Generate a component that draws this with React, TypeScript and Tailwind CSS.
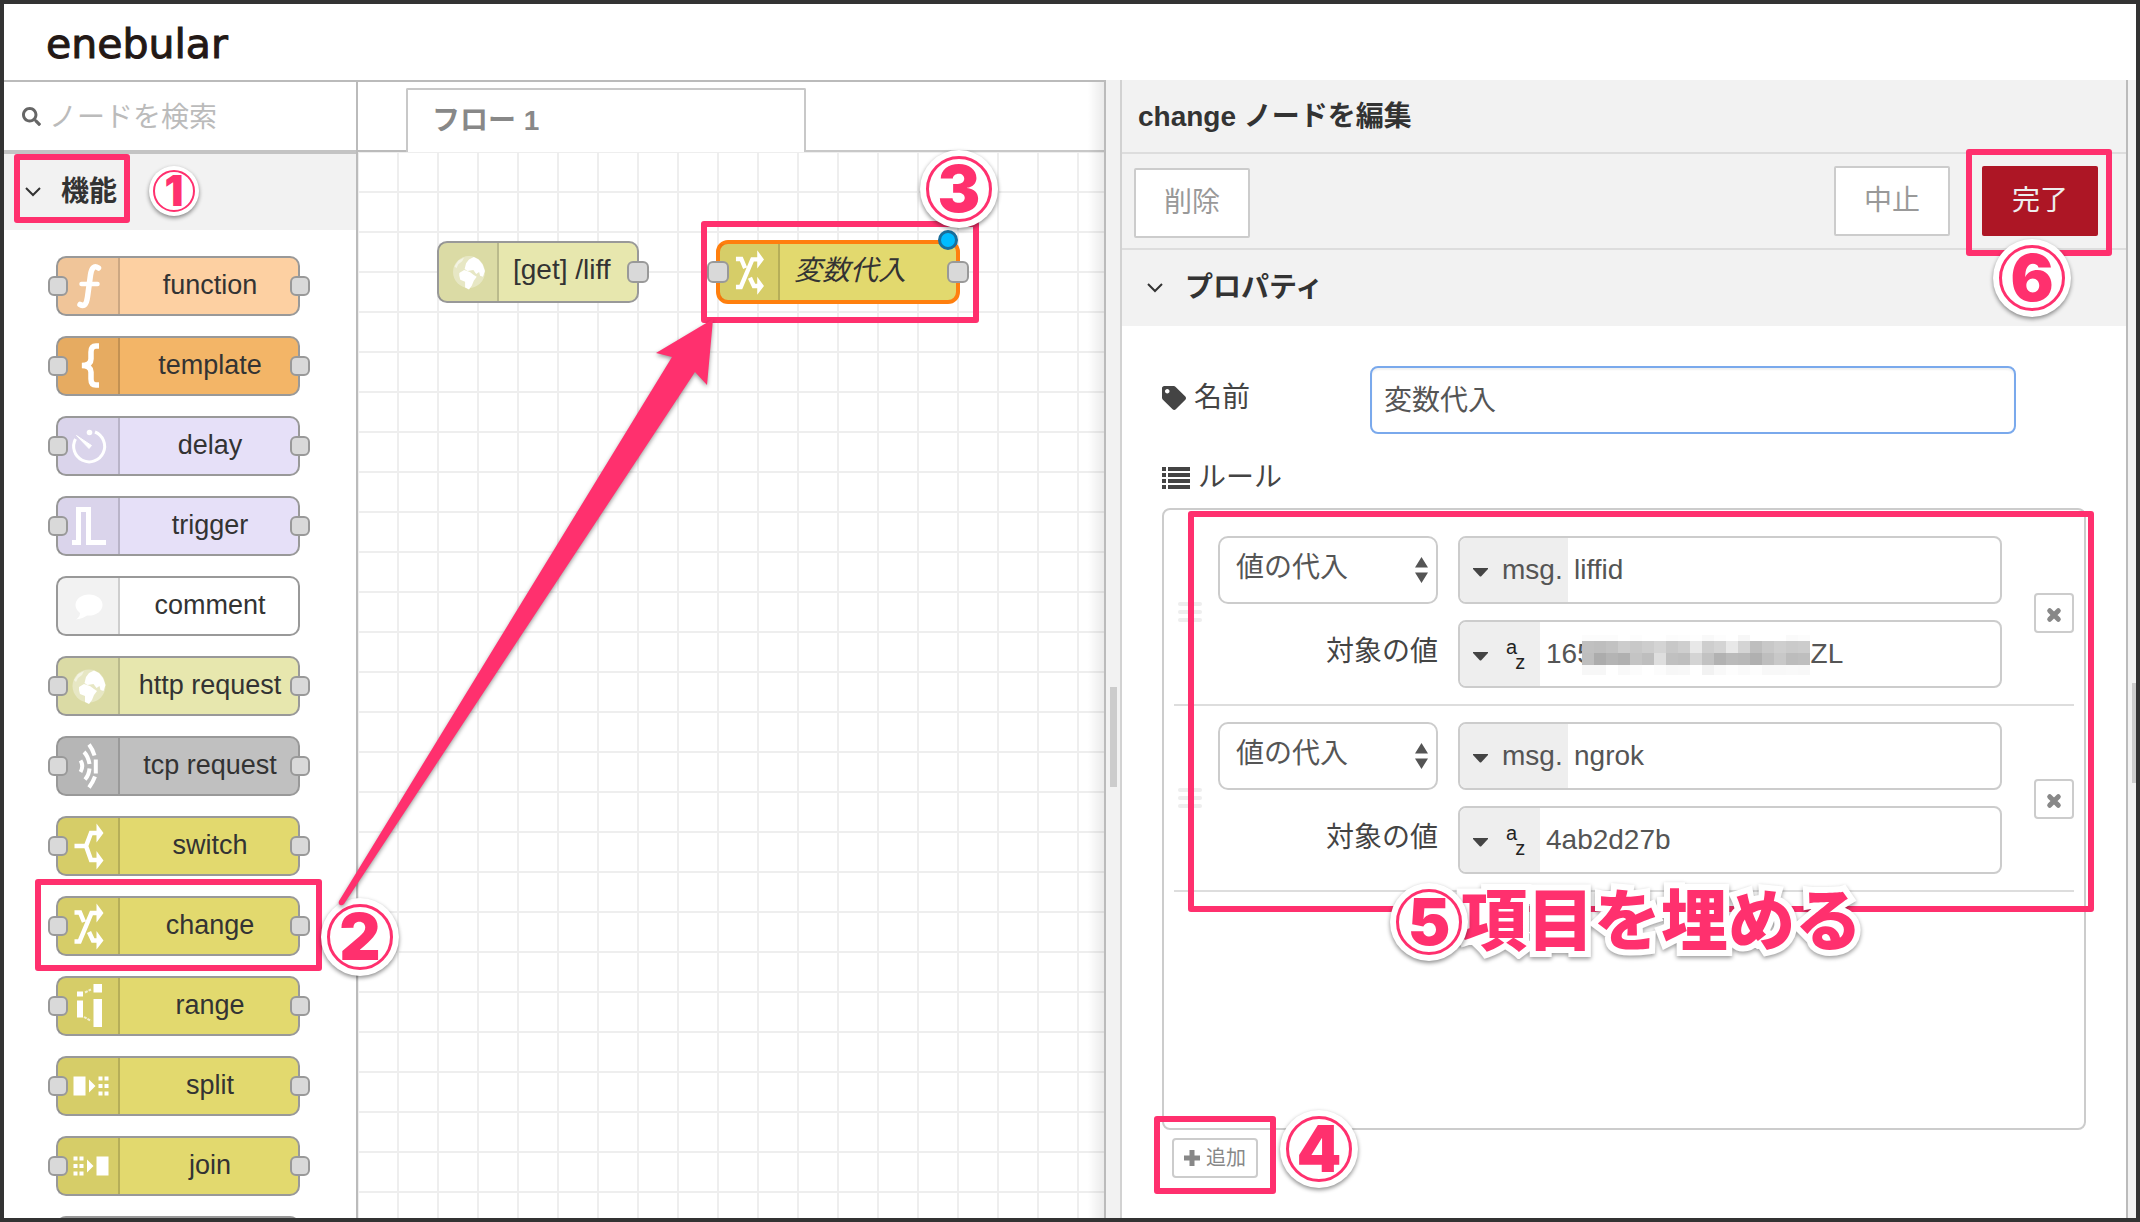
import { useState } from "react";
import type { ReactNode } from "react";
import clsx from "clsx";
import { FaSearch, FaTag } from "react-icons/fa";

type IconName =
  | "function"
  | "template"
  | "delay"
  | "trigger"
  | "comment"
  | "globe"
  | "bridge"
  | "switch"
  | "change"
  | "range"
  | "split"
  | "join";

const arrowHeads = (
  <path
    d="M38.500 7.500l7 9.500-7 9.500zM38.500 35l7 9.500-7 9z"
    fill="#fff"
    stroke="none"
  />
);

const icons: Record<IconName, ReactNode> = {
  function: (
    <g fill="none" stroke="#fff" strokeLinecap="round">
      <path d="M40.500 12C36 9 33.500 12 32.500 19L29.500 41C28.500 48 26.500 51 22 48.500" strokeWidth="5.500" />
      <path d="M23.500 28H39.500" strokeWidth="4.500" />
    </g>
  ),
  template: (
    <path
      d="M41 10h-3q-5 0-5 6v7q0 6-9 6.500 9 .5 9 6.500v7q0 6 5 6h3"
      fill="none"
      stroke="#fff"
      strokeWidth="5.500"
    />
  ),
  delay: (
    <g stroke="#fff" fill="none">
      <path d="M37 16A15.500 15.500 0 1 1 17.500 23" strokeWidth="3" />
      <circle cx="31.500" cy="16.500" r="2.800" fill="#fff" stroke="none" />
      <path d="M18.500 19.500L33.500 29.500 31 32.500z" fill="#fff" strokeWidth="1" />
    </g>
  ),
  trigger: (
    <path d="M14 46.500H20.500V13.500H30.500V46.500H48" fill="none" stroke="#fff" strokeWidth="5" />
  ),
  comment: (
    <g fill="#fff">
      <ellipse cx="31" cy="29" rx="13.500" ry="10.500" />
      <path d="M22 35q1 5-4 8.500 8-1 12-5z" />
    </g>
  ),
  globe: (
    <g fill="#fff">
      <circle cx="31" cy="30" r="16.500" opacity="0.35" />
      <path d="M28 21l3-4 5-2.500 5 2.500 4 5 2.500 7-2 6-3-1-1-4-3 2-3-4-6 1-3-2zM21 31l5-3 6 2 4 3 3 2-3 4-2 5-3 4-4-2v-6l-5-2-1-4z" />
      <path d="M16 24l4-6 6-3-2 4-4 3-2 4z" opacity="0.5" />
    </g>
  ),
  bridge: (
    <g fill="none" stroke="#fff" strokeWidth="4">
      <path d="M31 8.500Q34.500 13 36.500 19.500M37.800 23.500V37.500M37 40.500Q35 46 31 51.500" />
      <path d="M26 16Q30 20 31.500 28M31.500 32.500Q31 39 27 43.500" />
      <path d="M22.500 24.500Q26 30 22.500 36" />
    </g>
  ),
  switch: (
    <g fill="none" stroke="#fff" strokeWidth="4.500">
      <path d="M16.500 30H28M27.500 31.500L33 17H40M27.500 28.500L33 44H40" />
      {arrowHeads}
    </g>
  ),
  change: (
    <g fill="none" stroke="#fff" strokeWidth="4.500">
      <path d="M16.500 45.500H21.500L33.500 17H40M16.500 16.500H22L26 26M31 36L35 44.500H40" />
      {arrowHeads}
    </g>
  ),
  range: (
    <g fill="#fff">
      <path d="M19 15.500h6v5h-6zM19 24.500h6v17h-6zM35.500 8h8.500v8.500h-8.500zM35.500 23h8.500v28h-8.500z" />
      <path d="M27 16.500l6-3M26 41l7 4" stroke="#fff" strokeWidth="2" strokeDasharray="3 1" opacity="0.7" />
    </g>
  ),
  split: (
    <path
      d="M15.500 20.500h12v19h-12zM31 23.500l6.500 6.500-6.500 6.500zM40.500 20.500h4v4h-4zM46.500 20.500h4v4h-4zM40.500 28h4v4h-4zM46.500 28h4v4h-4zM40.500 35.500h4v4h-4zM46.500 35.500h4v4h-4z"
      fill="#fff"
    />
  ),
  join: (
    <path
      d="M38.500 20.500h12v19h-12zM29 23.500l6.500 6.500-6.500 6.500zM15.500 20.500h4v4h-4zM21.500 20.500h4v4h-4zM15.500 28h4v4h-4zM21.500 28h4v4h-4zM15.500 35.500h4v4h-4zM21.500 35.500h4v4h-4z"
      fill="#fff"
    />
  ),
};

const paletteNodes: { name: string; icon: IconName; color: string }[] = [
  { name: "function", icon: "function", color: "bg-[#fdd0a2]" },
  { name: "template", icon: "template", color: "bg-[#f3b567]" },
  { name: "delay", icon: "delay", color: "bg-[#e6e0f8]" },
  { name: "trigger", icon: "trigger", color: "bg-[#e6e0f8]" },
  { name: "comment", icon: "comment", color: "bg-white" },
  { name: "http request", icon: "globe", color: "bg-[#e7e7ae]" },
  { name: "tcp request", icon: "bridge", color: "bg-[#c0c0c0]" },
  { name: "switch", icon: "switch", color: "bg-[#e2d96e]" },
  { name: "change", icon: "change", color: "bg-[#e2d96e]" },
  { name: "range", icon: "range", color: "bg-[#e2d96e]" },
  { name: "split", icon: "split", color: "bg-[#e2d96e]" },
  { name: "join", icon: "join", color: "bg-[#e2d96e]" },
];

// grey levels of the masked part of the value, one list per row of blocks
const mosaic = [
  [252, 252, 252, 255, 253, 255, 255, 252, 253, 254, 249, 253, 255, 247, 255, 255, 255, 250, 252],
  [192, 190, 194, 204, 200, 205, 212, 200, 206, 232, 206, 212, 232, 212, 190, 200, 206, 202, 204],
  [190, 172, 180, 176, 196, 190, 222, 192, 190, 212, 194, 178, 186, 184, 176, 190, 200, 188, 190],
  [247, 247, 255, 249, 252, 255, 252, 247, 248, 255, 242, 249, 253, 250, 253, 248, 248, 249, 248],
];

function NodeIcon({ icon, className = "w-[62px]" }: { icon: IconName; className?: string }) {
  return (
    <span className={clsx("flex shrink-0 items-center border-r-2 border-black/15 bg-black/5", className)}>
      <svg className="h-14 w-full" viewBox="0 2 60 56" aria-hidden="true">
        {icons[icon]}
      </svg>
    </span>
  );
}

function Port({ className }: { className: string }) {
  return (
    <span
      className={clsx(
        "absolute top-1/2 -translate-y-1/2 rounded-md border-2 border-[#999] bg-[#d9d9d9]",
        className
      )}
    />
  );
}

function Highlight({ className }: { className: string }) {
  return (
    <span
      className={clsx(
        "pointer-events-none absolute z-10 rounded-[3px] border-6 border-[#ff306e]",
        className
      )}
    />
  );
}

function Step({ value, small, className }: { value: number; small?: boolean; className?: string }) {
  return (
    <span
      className={clsx(
        "pointer-events-none z-20 flex shrink-0 rounded-full bg-white font-[Inter,sans-serif] font-black not-italic text-[#ff306e] shadow-[0_2px_4px_rgba(0,0,0,0.45)]",
        small ? "size-[50px] p-1 text-[42px]" : "size-[78px] p-1.5 text-[64px]",
        className
      )}
    >
      <span
        className={clsx(
          "flex flex-1 items-center justify-center rounded-full border-[#ff306e] leading-none",
          small ? "border-2" : "border-3"
        )}
      >
        {value}
      </span>
    </span>
  );
}

function Chevron() {
  return (
    <svg className="h-3 w-4" viewBox="0 0 16 12" fill="none" stroke="#333" strokeWidth="2" aria-hidden="true">
      <path d="M1 2l7 7 7-7" />
    </svg>
  );
}

function Palette() {
  return (
    <aside className="relative z-10 w-[354px] shrink-0 border-r-2 border-[#bbb]">
      <label className="flex h-[72px] items-center border-b-4 border-[#c4c4c4] pl-[18px]">
        <FaSearch className="size-[19px] shrink-0 text-[#666]" />
        <input
          type="search"
          aria-label="ノードを検索"
          placeholder="ノードを検索"
          className="w-full min-w-0 pl-2 pt-1 leading-10 placeholder:text-[#bbb] focus:outline-none"
        />
      </label>
      <button className="relative flex h-[76px] w-full items-center gap-5 bg-[#f2f2f2] pl-[21px] text-left font-bold">
        <Chevron />
        <span className="leading-10">機能</span>
        <Highlight className="left-[10px] top-0 h-[69px] w-[116px]" />
        <Step value={1} small className="absolute left-[145px] top-3" />
      </button>
      <ul className="flex flex-col gap-5 pl-[52px] pt-[26px]">
        {paletteNodes.map((node) => (
          <li
            key={node.name}
            className={clsx(
              "relative flex h-[60px] w-[244px] rounded-[10px] border-2 border-[#999]",
              node.color
            )}
          >
            <NodeIcon icon={node.icon} />
            <span className="flex-1 pl-0.5 text-center text-[27px] leading-[54px]">{node.name}</span>
            {node.name !== "comment" && (
              <>
                <Port className="-left-[10px] size-5" />
                <Port className="-right-[12px] size-5" />
              </>
            )}
            {node.name === "change" && (
              <>
                <Highlight className="-left-[23px] -top-[19px] h-[92px] w-[287px]" />
                <Step value={2} className="absolute left-[263px] top-0" />
              </>
            )}
          </li>
        ))}
        <li className="flex h-[60px] w-[244px] rounded-[10px] border-2 border-[#999] bg-[#e2d96e]" />
      </ul>
    </aside>
  );
}

function Workspace() {
  return (
    <main className="relative flex min-w-0 flex-1 flex-col">
      <div className="flex h-[70px] items-end">
        <span className="w-12 self-stretch border-b-2 border-[#bbb]" />
        <button className="h-16 w-[400px] rounded-t-[2px] border-2 border-b-0 border-[#c8c8c8] pl-6 text-left font-bold text-[#888]">
          フロー 1
        </button>
        <span className="flex-1 self-stretch border-b-2 border-[#c8c8c8]" />
      </div>
      <div className="relative flex-1 bg-[linear-gradient(#eee_2px,transparent_2px),linear-gradient(90deg,#eee_2px,transparent_2px)] bg-size-[40px_40px] bg-position-[-1px_-1px]">
        <div className="absolute left-[79px] top-[89px] flex h-[62px] w-[202px] rounded-[10px] border-2 border-[#999] bg-[#e7e7ae]">
          <NodeIcon icon="globe" className="w-[60px]" />
          <span className="whitespace-nowrap pl-3.5 leading-[54px]">[get] /liff</span>
          <Port className="-right-[12px] size-[22px]" />
        </div>
        <div className="absolute left-[358px] top-[88px] flex h-16 w-[244px] rounded-[12px] border-4 border-[#ff7f0e] bg-[#e2d96e]">
          <NodeIcon icon="change" className="w-[60px]" />
          <span className="whitespace-nowrap pl-3.5 italic leading-[54px]">変数代入</span>
          <Port className="-left-[13px] size-[22px]" />
          <Port className="-right-[13px] size-[22px]" />
          <span className="absolute -top-[14px] right-[-2px] size-5 rounded-full border-3 border-[#1a6f9c] bg-[#00bcff]" />
          <Highlight className="-left-[19px] -top-[23px] h-[102px] w-[278px]" />
          <Step value={3} className="absolute -top-[94px] left-[200px]" />
        </div>
        <svg
          className="pointer-events-none absolute -left-5 top-[166px] z-20 h-[592px] w-[380px] drop-shadow-[0_2px_2px_rgba(0,0,0,0.4)]"
          viewBox="338 318 380 592"
          aria-hidden="true"
        >
          <path
            d="M713 319L656 353l16 4L339 901q-1 3 1 4 2 1 4-1L695 372l12 13z"
            fill="#ff306e"
          />
        </svg>
      </div>
      <div className="pointer-events-none absolute inset-y-0 right-0 w-4 bg-linear-to-r from-transparent to-black/8" />
    </main>
  );
}

function Caret() {
  return (
    <svg className="mt-1 h-[9px] w-[15px] shrink-0" viewBox="0 0 15 9" fill="#444" aria-hidden="true">
      <path d="M0 0h15v1L8.500 8q-1 1-2 0L0 1z" />
    </svg>
  );
}

function TypedInput({ kind, label, value }: { kind: "msg" | "str"; label: string; value: string }) {
  const [text, setText] = useState(value);
  return (
    <div className="flex h-[68px] min-w-0 flex-1 overflow-hidden rounded-lg border-2 border-[#ccc]">
      <button
        aria-label={label + "の型"}
        className={clsx(
          "flex shrink-0 items-center bg-[#eee] pl-[13px]",
          kind === "msg" ? "w-[108px] gap-3.5" : "w-20 gap-[18px]"
        )}
      >
        <Caret />
        {kind === "msg" ? (
          <span>msg.</span>
        ) : (
          <span className="flex text-xl leading-6 text-[#222]">
            <span className="mb-[15px]">a</span>
            <span className="-ml-0.5 mt-[15px]">z</span>
          </span>
        )}
      </button>
      <input
        aria-label={label}
        value={text}
        onChange={(e) => setText(e.target.value)}
        className="w-full min-w-0 pl-1.5 focus:outline-none"
      />
    </div>
  );
}

function Rule({ property, value, masked }: { property: string; value: string; masked?: boolean }) {
  return (
    <li className="flex items-center border-b-2 border-[#ddd] py-4 pl-1">
      <span className="mr-4 flex w-6 flex-col gap-1">
        <span className="h-1 rounded-sm bg-[#eee]" />
        <span className="h-1 rounded-sm bg-[#eee]" />
        <span className="h-1 rounded-sm bg-[#eee]" />
      </span>
      <div className="flex min-w-0 flex-1 flex-col gap-4 text-[#555]">
        <div className="flex gap-5">
          <div className="relative w-[220px] shrink-0">
            <select
              aria-label="操作"
              className="h-[68px] w-full appearance-none rounded-[10px] border-2 border-[#ccc] bg-white pb-1 pl-4"
            >
              <option>値の代入</option>
            </select>
            <svg
              className="pointer-events-none absolute right-[10px] top-[21px] h-[26px] w-[13px]"
              viewBox="0 0 13 26"
              fill="#555"
              aria-hidden="true"
            >
              <path d="M6.500 0L13 10.500H0zM6.500 26L13 15.500H0z" />
            </svg>
          </div>
          <TypedInput kind="msg" label="プロパティ" value={property} />
        </div>
        <div className="flex gap-5">
          <span className="w-[220px] shrink-0 pb-1 text-right leading-[64px] text-[#444]">対象の値</span>
          <div className="relative flex min-w-0 flex-1">
            <TypedInput kind="str" label="対象の値" value={value} />
            {masked && (
              <div className="pointer-events-none absolute left-[124px] top-[15px] grid grid-cols-[repeat(19,12px)]">
                {mosaic.map((row, r) =>
                  row.map((level, c) => (
                    <span
                      key={`${r}-${c}`}
                      className={r === 0 ? "h-1.5" : r === 3 ? "h-2.5" : "h-3"}
                      style={{ backgroundColor: `rgb(${level} ${level} ${level})` }}
                    />
                  ))
                )}
              </div>
            )}
          </div>
        </div>
      </div>
      <button
        aria-label="削除"
        className="ml-8 mt-0.5 flex size-10 items-center justify-center rounded border-2 border-[#ccc]"
      >
        <svg className="mt-1 size-4" viewBox="0 0 16 16" stroke="#888" strokeWidth="5" strokeLinecap="round" aria-hidden="true">
          <path d="M3.700 3.700l8.600 8.600M12.300 3.700l-8.600 8.600" />
        </svg>
      </button>
    </li>
  );
}

function Editor() {
  const [name, setName] = useState("変数代入");
  return (
    <section className="relative z-10 flex w-[1032px] shrink-0 bg-[#f2f2f2]">
      <div className="flex w-[18px] shrink-0 items-center justify-center border-x-2 border-l-[#bbb] border-r-[#d2d2d2] pt-44">
        <span className="h-[100px] w-[7px] bg-[#ccc]" />
      </div>
      <div className="flex min-w-0 flex-1 flex-col border-r-2 border-[#bbb]">
        <h2 className="h-[74px] border-b-2 border-[#ddd] pl-4 font-bold leading-[74px]">
          change ノードを編集
        </h2>
        <div className="flex h-24 items-center border-b-2 border-[#ddd] pl-3 pr-7 text-[#999]">
          <button className="mt-1 h-[70px] w-[116px] rounded-[2px] border-2 border-[#ccc] bg-white">
            削除
          </button>
          <button className="ml-auto h-[70px] w-[116px] rounded-[2px] border-2 border-[#ccc] bg-white">
            中止
          </button>
          <button className="relative ml-8 h-[70px] w-[116px] rounded-[2px] bg-[#ad1625] text-[#eee]">
            完了
            <Highlight className="-left-4 -top-[17px] h-[107px] w-[146px]" />
            <Step value={6} className="absolute left-[11px] top-[73px]" />
          </button>
        </div>
        <button className="flex h-[76px] items-center gap-[22px] pl-[25px] text-left font-bold">
          <Chevron />
          <span className="leading-10">プロパティ</span>
        </button>
        <form
          className="flex flex-1 flex-col bg-white px-10 pb-10 pt-10 text-[#444]"
          onSubmit={(e) => e.preventDefault()}
        >
          <div className="flex items-center pr-[70px]">
            <label htmlFor="node-name" className="flex w-52 items-center gap-2 pb-1 leading-10">
              <FaTag className="size-6" />
              名前
            </label>
            <input
              id="node-name"
              value={name}
              onChange={(e) => setName(e.target.value)}
              className="h-[68px] min-w-0 flex-1 rounded-lg border-2 border-[#7aa9ec] px-3 pb-1 text-[#555] shadow-[inset_0_2px_2px_rgba(0,0,0,0.06)] focus:outline-none"
            />
          </div>
          <h3 className="mt-6 flex items-center gap-2 leading-10">
            <svg className="h-[22px] w-7" viewBox="0 0 28 22" fill="#444" aria-hidden="true">
              <path d="M0 0h4v4H0zM6 0h22v4H6zM0 6h4v4H0zM6 6h22v4H6zM0 12h4v4H0zM6 12h22v4H6zM0 18h4v4H0zM6 18h22v4H6z" />
            </svg>
            ルール
          </h3>
          <div className="relative mt-2.5 flex-1 rounded-lg border-2 border-[#ccc] p-2.5">
            <ul>
              <Rule property="liffid" value={"165" + "\u00a0".repeat(28) + "ZL"} masked />
              <Rule property="ngrok" value="4ab2d27b" />
            </ul>
            <Highlight className="left-6 top-px h-[401px] w-[906px]" />
            <p className="absolute left-[226px] top-[373px] z-20 flex items-center whitespace-nowrap">
              <Step value={5} />
              <span className="-ml-2 text-[67px] font-black leading-[78px] text-[#ff306e] drop-shadow-[0_2px_2px_rgba(0,0,0,0.4)] [-webkit-text-stroke:12px_white] [paint-order:stroke_fill]">
                項目を埋める
              </span>
            </p>
          </div>
          <div className="mt-2 flex pl-2.5">
            <button className="relative flex h-10 w-[86px] items-center justify-center gap-1.5 rounded border-2 border-[#ccc] text-xl text-[#888]">
              <svg className="size-4" viewBox="0 0 16 16" stroke="#888" strokeWidth="5" aria-hidden="true">
                <path d="M8 0v16M0 8h16" />
              </svg>
              追加
              <Highlight className="-left-5 -top-[24px] h-[78px] w-[122px]" />
              <Step value={4} className="absolute -top-[30px] left-[106px]" />
            </button>
          </div>
        </form>
      </div>
      <div className="flex w-2 shrink-0 items-center justify-end pt-[168px]">
        <span className="h-[100px] w-1 bg-[#ccc]" />
      </div>
    </section>
  );
}

export default function App() {
  return (
    <div className="flex h-screen flex-col overflow-hidden border-4 border-[#333] bg-white font-['Liberation_Sans','Noto_Sans_CJK_JP',sans-serif] text-[28px] text-[#333]">
      <header className="flex h-[76px] shrink-0 items-center pl-[42px] pt-1">
        <a
          href="#"
          className="font-['DejaVu_Sans',sans-serif] text-[41px] leading-none text-[#231815] [-webkit-text-stroke:1px_#231815]"
        >
          enebular
        </a>
      </header>
      <div className="flex min-h-0 flex-1">
        <div className="flex min-w-0 flex-1 border-t-2 border-[#bbb]">
          <Palette />
          <Workspace />
        </div>
        <Editor />
      </div>
    </div>
  );
}
